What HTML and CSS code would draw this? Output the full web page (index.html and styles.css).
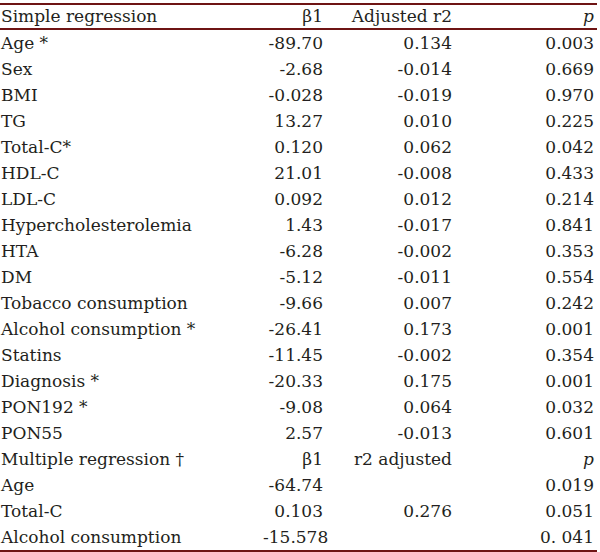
FILE: index.html
```html
<!DOCTYPE html>
<html>
<head>
<meta charset="utf-8">
<link rel="stylesheet" href="styles.css">
</head>
<body>
<table class="reg">
<colgroup><col class="c1"><col class="c2"><col class="c3"><col class="c4"></colgroup>
<thead>
<tr class="head"><th class="lab">Simple regression</th><th class="num">β1</th><th class="num">Adjusted r2</th><th class="num"><i>p</i></th></tr>
</thead>
<tbody>
<tr><td>Age *</td><td class="num">-89.70</td><td class="num">0.134</td><td class="num">0.003</td></tr>
<tr><td>Sex</td><td class="num">-2.68</td><td class="num">-0.014</td><td class="num">0.669</td></tr>
<tr><td>BMI</td><td class="num">-0.028</td><td class="num">-0.019</td><td class="num">0.970</td></tr>
<tr><td>TG</td><td class="num">13.27</td><td class="num">0.010</td><td class="num">0.225</td></tr>
<tr><td>Total-C*</td><td class="num">0.120</td><td class="num">0.062</td><td class="num">0.042</td></tr>
<tr><td>HDL-C</td><td class="num">21.01</td><td class="num">-0.008</td><td class="num">0.433</td></tr>
<tr><td>LDL-C</td><td class="num">0.092</td><td class="num">0.012</td><td class="num">0.214</td></tr>
<tr><td>Hypercholesterolemia</td><td class="num">1.43</td><td class="num">-0.017</td><td class="num">0.841</td></tr>
<tr><td>HTA</td><td class="num">-6.28</td><td class="num">-0.002</td><td class="num">0.353</td></tr>
<tr><td>DM</td><td class="num">-5.12</td><td class="num">-0.011</td><td class="num">0.554</td></tr>
<tr><td>Tobacco consumption</td><td class="num">-9.66</td><td class="num">0.007</td><td class="num">0.242</td></tr>
<tr><td>Alcohol consumption *</td><td class="num">-26.41</td><td class="num">0.173</td><td class="num">0.001</td></tr>
<tr><td>Statins</td><td class="num">-11.45</td><td class="num">-0.002</td><td class="num">0.354</td></tr>
<tr><td>Diagnosis *</td><td class="num">-20.33</td><td class="num">0.175</td><td class="num">0.001</td></tr>
<tr><td>PON192 *</td><td class="num">-9.08</td><td class="num">0.064</td><td class="num">0.032</td></tr>
<tr><td>PON55</td><td class="num">2.57</td><td class="num">-0.013</td><td class="num">0.601</td></tr>
<tr><td>Multiple regression †</td><td class="num">β1</td><td class="num">r2 adjusted</td><td class="num"><i>p</i></td></tr>
<tr><td>Age</td><td class="num">-64.74</td><td class="num"></td><td class="num">0.019</td></tr>
<tr><td>Total-C</td><td class="num">0.103</td><td class="num">0.276</td><td class="num">0.051</td></tr>
<tr><td>Alcohol consumption</td><td class="num">-15.578</td><td class="num"></td><td class="num">0. 041</td></tr>
</tbody>
</table>
</body>
</html>
```
FILE: styles.css
```css
html, body {
  margin: 0;
  padding: 0;
  background: #ffffff;
}
body {
  padding-top: 3px;
  font-family: "DejaVu Serif", "Liberation Serif", serif;
  font-size: 17px;
  color: #231f20;
}
.reg {
  border-collapse: collapse;
  width: 597px;
  table-layout: fixed;
  border-top: 2px solid #6e1414;
  border-bottom: 2px solid #6e1414;
}
.c1 { width: 263px; }
.c2 { width: 60px; }
.c3 { width: 129px; }
.c4 { width: 145px; }
.reg th, .reg td {
  padding: 0;
  height: 26px;
  line-height: 26px;
  font-weight: normal;
  white-space: nowrap;
  text-align: left;
}
.reg .head th {
  height: 23px;
  line-height: 23px;
  vertical-align: top;
  border-bottom: 2px solid #6e1414;
}
.reg .num {
  text-align: right;
}
.reg td.num:last-child, .reg th.num:last-child {
  padding-right: 3px;
}
.reg td:first-child, .reg th:first-child {
  padding-left: 1px;
}
```
